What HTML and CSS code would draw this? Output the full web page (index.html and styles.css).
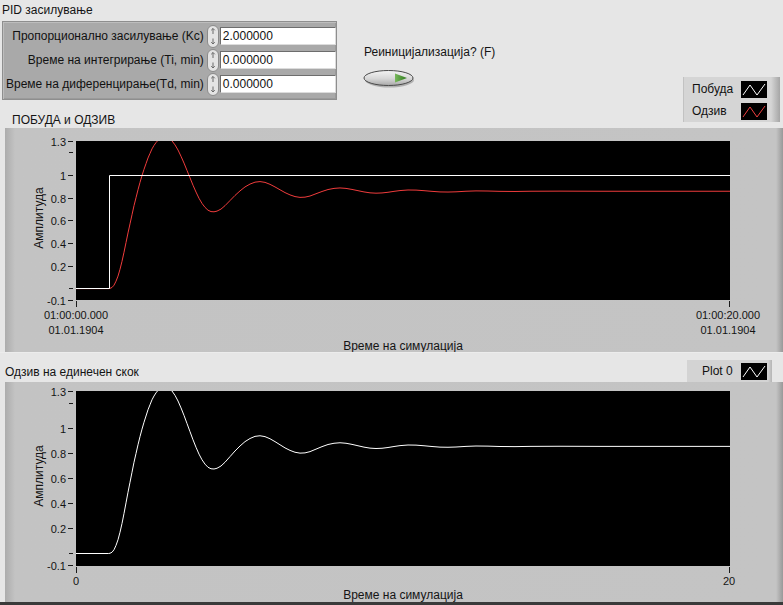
FILE: index.html
```html
<!DOCTYPE html>
<html lang="mk">
<head>
<meta charset="utf-8">
<title>PID засилување</title>
<link rel="stylesheet" href="styles.css">
</head>
<body>
<div class="window">
  <div class="top">
    <div class="left-col">
      <div class="group-title">PID засилување</div>
      <div class="pid-panel">
        <span class="pid-label">Пропорционално засилување (Kc)</span>
        <svg class="spin" viewBox="0 0 12 23"><rect x="0.5" y="0.5" width="11" height="22" rx="5.5" class="spin-body"/><path d="M6 3.5V9M4.2 5.3L6 3.5L7.8 5.3M6 13.5V19M4.2 17.2L6 19L7.8 17.2" class="spin-arrow"/></svg>
        <span class="num">2.000000</span>
        <span class="pid-label">Време на интегрирање (Ti, min)</span>
        <svg class="spin" viewBox="0 0 12 23"><rect x="0.5" y="0.5" width="11" height="22" rx="5.5" class="spin-body"/><path d="M6 3.5V9M4.2 5.3L6 3.5L7.8 5.3M6 13.5V19M4.2 17.2L6 19L7.8 17.2" class="spin-arrow"/></svg>
        <span class="num">0.000000</span>
        <span class="pid-label">Време на диференцирање(Td, min)</span>
        <svg class="spin" viewBox="0 0 12 23"><rect x="0.5" y="0.5" width="11" height="22" rx="5.5" class="spin-body"/><path d="M6 3.5V9M4.2 5.3L6 3.5L7.8 5.3M6 13.5V19M4.2 17.2L6 19L7.8 17.2" class="spin-arrow"/></svg>
        <span class="num">0.000000</span>
      </div>
      <div class="chart-title">ПОБУДА и ОДЗИВ</div>
    </div>
    <div class="reinit">
      <div class="reinit-label">Реиницијализација? (F)</div>
      <svg class="led-btn" viewBox="0 0 54 22">
        <defs>
          <linearGradient id="btnFill" x1="0" y1="0" x2="0" y2="1">
            <stop offset="0" stop-color="#f4f4f4"/>
            <stop offset="0.55" stop-color="#d6d6d6"/>
            <stop offset="1" stop-color="#a9a9a9"/>
          </linearGradient>
          <linearGradient id="ledFill" x1="0" y1="0" x2="1" y2="0">
            <stop offset="0" stop-color="#79b85c"/>
            <stop offset="1" stop-color="#2d7a1c"/>
          </linearGradient>
        </defs>
        <ellipse cx="26.5" cy="11" rx="24.5" ry="7.5" fill="#8c8c8c" opacity="0.6"/>
        <ellipse cx="25.5" cy="9" rx="24.5" ry="7.5" fill="url(#btnFill)" stroke="#4a4a4a" stroke-width="1"/>
        <polygon points="32,4.5 44,9 32,13.5" fill="url(#ledFill)"/>
      </svg>
    </div>
    <div class="legend">
      <span>Побуда</span>
      <svg class="plot-icon" viewBox="0 0 26 17"><rect width="26" height="17" fill="#000"/><polyline points="2,14 9,4 16,14 24,3" fill="none" stroke="#fff" stroke-width="1"/></svg>
      <span>Одзив</span>
      <svg class="plot-icon" viewBox="0 0 26 17"><rect width="26" height="17" fill="#000"/><polyline points="2,14 9,4 16,14 24,3" fill="none" stroke="#f04040" stroke-width="1"/></svg>
    </div>
  </div>

  <div class="frame frame-1">
    <svg class="chart" width="778" height="224" viewBox="5 128 778 224">
      <defs>
        <clipPath id="clipTop" clipPathUnits="userSpaceOnUse"><rect x="76" y="141" width="654" height="159"/></clipPath>
      </defs>
      <rect x="76" y="141" width="654" height="159" fill="#000"/>
      <g clip-path="url(#clipTop)">
        <polyline class="curve red" transform="matrix(1 0 0 -113.6 0 288.6)" points="76,0 108.7,0 110,0.002 112,0.01 114,0.03 116,0.065 118,0.11 120,0.17 122,0.24 124,0.32 126,0.405 128,0.49 130,0.57 132,0.65 134,0.73 136,0.8 138,0.87 140,0.935 142,0.995 144,1.05 146,1.1 148,1.15 150,1.19 152,1.23 154,1.26 156,1.285 158,1.305 160,1.32 163,1.33 166,1.33 169,1.32 172,1.3 175,1.265 178,1.22 181,1.165 184,1.105 187,1.04 190,0.975 193,0.91 196,0.85 199,0.795 202,0.75 205,0.715 208,0.69 211,0.678 214,0.676 217,0.682 221,0.7 225,0.73 230,0.775 235,0.82 240,0.86 245,0.895 250,0.92 255,0.937 260,0.942 265,0.935 270,0.918 275,0.895 280,0.87 285,0.845 290,0.825 295,0.81 300,0.803 305,0.805 310,0.815 316,0.835 322,0.855 328,0.872 334,0.882 340,0.886 346,0.882 352,0.873 358,0.862 364,0.851 370,0.843 376,0.84 382,0.842 388,0.848 394,0.856 400,0.863 408,0.868 416,0.867 424,0.862 432,0.856 440,0.851 448,0.85 456,0.852 466,0.857 476,0.86 488,0.859 500,0.856 515,0.855 530,0.857 560,0.858 600,0.857 730,0.857"/>
        <path class="step" d="M76 288.5H109.5V175.5H730"/>
      </g>
      <g class="ticks">
        <path d="M68 141.5H73M69 152.5H73M68 175.5H73M68 198.5H73M68 220.5H73M68 243.5H73M68 266.5H73M69 288.5H73M68 300.5H73M76.5 301V307M729.5 301V307"/>
      </g>
      <g class="tick-text">
        <text x="66" y="142">1.3</text>
        <text x="66" y="176">1</text>
        <text x="66" y="199">0.8</text>
        <text x="66" y="221">0.6</text>
        <text x="66" y="244">0.4</text>
        <text x="66" y="267">0.2</text>
        <text x="66" y="301">-0.1</text>
      </g>
      <g class="x-text">
        <text x="76" y="315">01:00:00.000</text>
        <text x="76" y="330">01.01.1904</text>
        <text x="728" y="315">01:00:20.000</text>
        <text x="728" y="330">01.01.1904</text>
      </g>
      <text class="axis-title" x="403" y="345.5">Време на симулација</text>
      <text class="axis-title" transform="translate(38.5 218) rotate(-90)">Амплитуда</text>
    </svg>
  </div>

  <div class="mid">
    <div class="mid-title">Одзив на единечен скок</div>
    <div class="plot-legend">
      <span>Plot 0</span>
      <svg class="plot-icon" viewBox="0 0 26 17"><rect width="26" height="17" fill="#000"/><polyline points="2,14 9,4 16,14 24,3" fill="none" stroke="#fff" stroke-width="1"/></svg>
    </div>
  </div>

  <div class="frame frame-2">
    <svg class="chart" width="778" height="220" viewBox="5 382 778 220">
      <defs>
        <clipPath id="clipBottom" clipPathUnits="userSpaceOnUse"><rect x="76" y="391" width="654" height="175"/></clipPath>
      </defs>
      <rect x="76" y="391" width="654" height="175" fill="#000"/>
      <g clip-path="url(#clipBottom)">
        <polyline class="curve white" transform="matrix(1 0 0 -125 0 553.5)" points="76,0 108.7,0 110,0.002 112,0.01 114,0.03 116,0.065 118,0.11 120,0.17 122,0.24 124,0.32 126,0.405 128,0.49 130,0.57 132,0.65 134,0.73 136,0.8 138,0.87 140,0.935 142,0.995 144,1.05 146,1.1 148,1.15 150,1.19 152,1.23 154,1.26 156,1.285 158,1.305 160,1.32 163,1.33 166,1.33 169,1.32 172,1.3 175,1.265 178,1.22 181,1.165 184,1.105 187,1.04 190,0.975 193,0.91 196,0.85 199,0.795 202,0.75 205,0.715 208,0.69 211,0.678 214,0.676 217,0.682 221,0.7 225,0.73 230,0.775 235,0.82 240,0.86 245,0.895 250,0.92 255,0.937 260,0.942 265,0.935 270,0.918 275,0.895 280,0.87 285,0.845 290,0.825 295,0.81 300,0.803 305,0.805 310,0.815 316,0.835 322,0.855 328,0.872 334,0.882 340,0.886 346,0.882 352,0.873 358,0.862 364,0.851 370,0.843 376,0.84 382,0.842 388,0.848 394,0.856 400,0.863 408,0.868 416,0.867 424,0.862 432,0.856 440,0.851 448,0.85 456,0.852 466,0.857 476,0.86 488,0.859 500,0.856 515,0.855 530,0.857 560,0.858 600,0.857 730,0.857"/>
      </g>
      <g class="ticks">
        <path d="M68 391.5H73M69 403.5H73M68 428.5H73M68 453.5H73M68 478.5H73M68 503.5H73M68 528.5H73M69 553.5H73M68 565.5H73M76.5 567V573M729.5 567V573"/>
      </g>
      <g class="tick-text">
        <text x="66" y="392">1.3</text>
        <text x="66" y="429">1</text>
        <text x="66" y="454">0.8</text>
        <text x="66" y="479">0.6</text>
        <text x="66" y="504">0.4</text>
        <text x="66" y="529">0.2</text>
        <text x="66" y="566">-0.1</text>
      </g>
      <g class="x-text">
        <text x="76" y="580.5">0</text>
        <text x="729" y="580.5">20</text>
      </g>
      <text class="axis-title" x="403" y="594.5">Време на симулација</text>
      <text class="axis-title" transform="translate(38.5 476) rotate(-90)">Амплитуда</text>
    </svg>
  </div>
</div>
</body>
</html>
```

FILE: styles.css
```css
* {
  box-sizing: border-box;
}

html,
body {
  margin: 0;
  padding: 0;
  background: #e6e6e6;
}

body {
  font-family: "Liberation Sans", Arial, sans-serif;
  font-size: 12px;
  color: #141414;
}

.window {
  width: 783px;
  height: 605px;
  overflow: hidden;
  background: #e6e6e6;
  border-bottom: 3px solid #3a3a3a;
  display: flex;
  flex-direction: column;
}

/* ---------- top area ---------- */
.top {
  flex: none;
  height: 128px;
  display: flex;
}

.left-col {
  width: 338px;
  display: flex;
  flex-direction: column;
}

.group-title {
  height: 21px;
  line-height: 21px;
  padding-left: 2px;
}

.pid-panel {
  margin-left: 2px;
  width: 335px;
  height: 79px;
  background: #a9a9a9;
  border: 1px solid #8e8e8e;
  box-shadow: inset 1px 1px 0 #bdbdbd, inset -1px -1px 0 #9a9a9a;
  padding: 2px 5px 3px 3px;
  display: grid;
  grid-template-columns: 1fr 16px 116px;
  grid-auto-rows: 24px;
  align-items: center;
}

.pid-label {
  text-align: right;
  white-space: nowrap;
  color: #111;
}

.spin {
  display: block;
  width: 12px;
  height: 23px;
  margin-left: 3px;
}

.spin-body {
  fill: #e4e4e4;
  stroke: #8a8a8a;
  stroke-width: 1;
}

.spin-arrow {
  fill: none;
  stroke: #6a6a6a;
  stroke-width: 1;
}

.num {
  height: 18px;
  line-height: 16px;
  background: #fff;
  border: 1px solid;
  border-color: #6d6d6d #dcdcdc #dcdcdc #6d6d6d;
  padding-left: 2px;
  color: #111;
}

.chart-title {
  margin-top: auto;
  height: 16px;
  line-height: 16px;
  padding-left: 12px;
}

.reinit {
  margin-left: 26px;
  padding-top: 44px;
}

.reinit-label {
  height: 16px;
  line-height: 16px;
  white-space: nowrap;
}

.led-btn {
  display: block;
  width: 54px;
  height: 22px;
  margin-top: 9px;
  margin-left: -1px;
}

.legend {
  margin-left: auto;
  margin-right: 3px;
  margin-top: 77px;
  width: 97px;
  height: 45px;
  display: grid;
  grid-template-columns: 1fr 26px;
  grid-auto-rows: 22px;
  align-items: center;
  padding: 1px 13px 0 8px;
  background: linear-gradient(to right, #d5d5d5 0, #d5d5d5 calc(100% - 9px), #a6a6a6 100%);
  border-left: 1px solid #c2c2c2;
  color: #111;
}

.plot-icon {
  display: block;
  width: 26px;
  height: 17px;
}

/* ---------- chart frames ---------- */
.frame {
  flex: none;
  margin-left: 5px;
  background: linear-gradient(to right, #acacac 0, #c3c3c3 10px, #c4c4c4 calc(100% - 7px), #999 100%);
}

.frame-1 {
  height: 224px;
}

.frame-2 {
  height: 220px;
}

.chart {
  display: block;
  overflow: visible;
}

.curve {
  fill: none;
  stroke-width: 1;
  stroke-linejoin: round;
  vector-effect: non-scaling-stroke;
}

.curve.red {
  stroke: #f03c3c;
}

.curve.white {
  stroke: #ffffff;
}

.step {
  fill: none;
  stroke: #ffffff;
  stroke-width: 1;
}

.ticks path {
  fill: none;
  stroke: #1a1a1a;
  stroke-width: 1;
}

.tick-text text {
  font-size: 11px;
  fill: #141414;
  text-anchor: end;
  dominant-baseline: central;
}

.x-text text {
  font-size: 11px;
  fill: #141414;
  text-anchor: middle;
  dominant-baseline: central;
}

.axis-title {
  font-size: 12px;
  fill: #141414;
  text-anchor: middle;
  dominant-baseline: central;
}

/* ---------- middle strip ---------- */
.mid {
  flex: none;
  height: 30px;
  display: flex;
  align-items: flex-end;
  border-top: 1px solid #ececec;
}

.mid-title {
  height: 20px;
  line-height: 20px;
  padding-left: 5px;
}

.plot-legend {
  margin-left: auto;
  margin-right: 11px;
  width: 85px;
  height: 22px;
  display: flex;
  align-items: center;
  padding: 0 5px 0 15px;
  background: linear-gradient(to right, #d3d3d3 0, #d3d3d3 calc(100% - 4px), #b5b5b5 100%);
  color: #111;
}

.plot-legend .plot-icon {
  margin-left: auto;
}
```
